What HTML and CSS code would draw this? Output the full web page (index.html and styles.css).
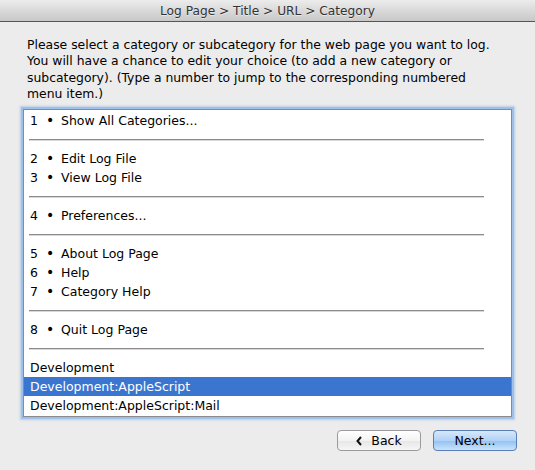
FILE: index.html
```html
<!DOCTYPE html>
<html>
<head>
<meta charset="utf-8">
<link rel="stylesheet" href="styles.css">
</head>
<body>
<div class="window">
  <div class="titlebar">Log Page &gt; Title &gt; URL &gt; Category</div>
  <div class="content">
    <p class="prompt">Please select a category or subcategory for the web page you want to log. You will have a chance to edit your choice (to add a new category or subcategory). (Type a number to jump to the corresponding numbered menu item.)</p>
    <div class="listbox">
      <div class="row"><span class="num">1</span><span class="bul">•</span>Show All Categories...</div>
      <div class="sep"></div>
      <div class="row"><span class="num">2</span><span class="bul">•</span>Edit Log File</div>
      <div class="row"><span class="num">3</span><span class="bul">•</span>View Log File</div>
      <div class="sep"></div>
      <div class="row"><span class="num">4</span><span class="bul">•</span>Preferences...</div>
      <div class="sep"></div>
      <div class="row"><span class="num">5</span><span class="bul">•</span>About Log Page</div>
      <div class="row"><span class="num">6</span><span class="bul">•</span>Help</div>
      <div class="row"><span class="num">7</span><span class="bul">•</span>Category Help</div>
      <div class="sep"></div>
      <div class="row"><span class="num">8</span><span class="bul">•</span>Quit Log Page</div>
      <div class="sep"></div>
      <div class="row">Development</div>
      <div class="row selected">Development:AppleScript</div>
      <div class="row">Development:AppleScript:Mail</div>
    </div>
    <div class="buttons">
      <button class="btn back"><svg class="chev" width="6" height="10" viewBox="0 0 6 10"><path d="M5 1 L1.5 5 L5 9" fill="none" stroke="#111" stroke-width="2"/></svg>Back</button>
      <button class="btn next">Next...</button>
    </div>
  </div>
</div>
</body>
</html>
```

FILE: styles.css
```css
html, body {
  margin: 0;
  padding: 0;
  background: #ececec;
}
body {
  font-family: "DejaVu Sans", "Liberation Sans", sans-serif;
  font-size: 12px;
  color: #000;
}
.window {
  width: 535px;
  height: 470px;
  display: flex;
  flex-direction: column;
}
.titlebar {
  height: 21px;
  line-height: 22px;
  text-align: center;
  font-size: 12.2px;
  color: #333;
  background: linear-gradient(#ececec, #d6d6d6 60%, #c8c8c8);
  border-bottom: 1px solid #555;
  border-radius: 4px 4px 0 0;
  text-shadow: 0 1px 0 rgba(255,255,255,0.5);
}
.content {
  padding: 0 0 0 23px;
  display: flex;
  flex-direction: column;
}
.prompt {
  margin: 15px 0 0 4px;
  width: 468px;
  font-size: 12.4px;
  line-height: 16.3px;
}
.listbox {
  margin-top: 7px;
  width: 487px;
  height: 305px;
  background: #fff;
  border: 1px solid #8a8a8a;
  box-shadow: 0 0 0 2px #9dc1ea, 0 0 2px 3px rgba(130,175,230,0.5);
  padding-top: 1px;
  box-sizing: content-box;
}
.row {
  height: 19px;
  line-height: 19px;
  padding-left: 6px;
  font-size: 12.5px;
  white-space: nowrap;
}
.row.selected {
  background: #3a76cf;
  color: #fff;
}
.num {
  display: inline-block;
  width: 16px;
}
.bul {
  display: inline-block;
  width: 15px;
  font-size: 14px;
}
.sep {
  height: 19px;
  display: flex;
  align-items: center;
  padding-left: 5px;
}
.sep::before {
  content: "";
  display: block;
  width: 455px;
  height: 1px;
  background: #8c8c8c;
  border-bottom: 1px solid #d8d8d8;
}
.buttons {
  display: flex;
  justify-content: flex-end;
  gap: 12px;
  margin-top: 13px;
  padding-right: 18px;
}
.btn {
  width: 84px;
  height: 21px;
  border-radius: 4px;
  font-family: "DejaVu Sans", "Liberation Sans", sans-serif;
  font-size: 12.5px;
  color: #000;
  padding: 0;
  display: flex;
  align-items: center;
  justify-content: center;
  gap: 9px;
}
.back {
  border: 1px solid #9b9b9b;
  background: linear-gradient(#ffffff, #f3f3f3 50%, #e6e6e6 51%, #f6f6f6);
}
.next {
  border: 1px solid #5b7db5;
  background: linear-gradient(#d6e8fb, #b0d2f6 50%, #92c1f1 51%, #c9e3fc);
}
.chev {
  display: block;
}
```
